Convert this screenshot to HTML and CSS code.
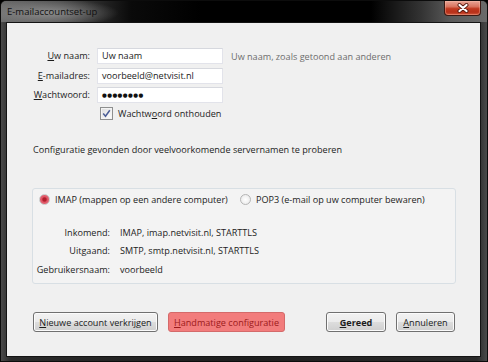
FILE: index.html
```html
<!DOCTYPE html>
<html lang="nl">
<head>
  <meta charset="UTF-8">
  <meta name="viewport" content="width=device-width, initial-scale=1.0">
  <title>E-mailaccountset-up</title>
  <link rel="stylesheet" href="styles.css">
</head>
<body>

  <div class="window">
    <div class="titlebar">
      <span class="title">E-mailaccountset-up</span>
      <span class="close-btn">
        <svg width="14" height="10" viewBox="0 0 14 10">
          <path d="M3.5 2 L10.5 8 M10.5 2 L3.5 8" stroke="#5a1e14" stroke-width="4" stroke-linecap="round"/>
          <path d="M3.5 2 L10.5 8 M10.5 2 L3.5 8" stroke="#ffffff" stroke-width="2.2" stroke-linecap="round"/>
        </svg>
      </span>
    </div>

    <div class="client">
      <!-- Account fields -->
      <div class="identity">
        <label class="field-label"><u>U</u>w naam:</label>
        <div class="textbox">Uw naam</div>
        <span class="hint">Uw naam, zoals getoond aan anderen</span>

        <label class="field-label"><u>E</u>-mailadres:</label>
        <div class="textbox">voorbeeld@netvisit.nl</div>
        <span></span>

        <label class="field-label"><u>W</u>achtwoord:</label>
        <div class="textbox password">&#9679;&#9679;&#9679;&#9679;&#9679;&#9679;&#9679;&#9679;</div>
        <span></span>

        <div class="remember">
          <span class="checkbox">
            <svg width="9" height="9" viewBox="0 0 9 9">
              <path d="M1.2 4.6 L3.5 7.2 L7.8 1.2" fill="none" stroke="#4a5d96" stroke-width="1.5"/>
            </svg>
          </span>
          <span>Wachtw<u>o</u>ord onthouden</span>
        </div>
      </div>

      <p class="status">Configuratie gevonden door veelvoorkomende servernamen te proberen</p>

      <!-- Found configuration -->
      <div class="groupbox">
        <div class="protocols">
          <span class="option imap"><span class="radio checked"></span><span>IMAP (mappen op een andere computer)</span></span>
          <span class="option"><span class="radio"></span><span>POP3 (e-mail op uw computer bewaren)</span></span>
        </div>
        <div class="details">
          <span class="detail-label">Inkomend:</span>
          <span>IMAP, imap.netvisit.nl, STARTTLS</span>
          <span class="detail-label">Uitgaand:</span>
          <span>SMTP, smtp.netvisit.nl, STARTTLS</span>
          <span class="detail-label">Gebruikersnaam:</span>
          <span>voorbeeld</span>
        </div>
      </div>

      <div class="buttons">
        <div class="button-group">
          <button class="btn btn-new"><u>N</u>ieuwe account verkrijgen</button>
          <button class="btn btn-manual"><u>H</u>andmatige configuratie</button>
        </div>
        <div class="button-group">
          <button class="btn btn-done"><u>G</u>ereed</button>
          <button class="btn btn-cancel"><u>A</u>nnuleren</button>
        </div>
      </div>
    </div>
  </div>

</body>
</html>
```

FILE: styles.css
```css
body {
  margin: 0;
  background: #000;
  font-family: "Open Sans", "Noto Sans", sans-serif;
  font-size: 9.1px;
  color: #1c1c1c;
}

u {
  text-decoration: underline;
  text-underline-offset: 1px;
}

/* Window frame */
.window {
  width: 488px;
  height: 362px;
  box-sizing: border-box;
  display: flex;
  flex-direction: column;
  border: 1px solid #0c0c0c;
  border-radius: 6px 6px 0 0;
  background: linear-gradient(to right, #4a4a4a 0, #2a2a2a 10px, #1e1e1e 50%, #2a2a2a calc(100% - 10px), #4a4a4a 100%);
  overflow: hidden;
}

.titlebar {
  height: 21px;
  flex: none;
  display: flex;
  justify-content: space-between;
  align-items: flex-start;
  padding: 0 6px 0 6px;
  background:
    radial-gradient(ellipse 70px 14px at 48px 12px, rgba(150, 150, 150, 0.85), rgba(120, 120, 120, 0) 100%),
    linear-gradient(to right, #6b6b6b 0, #4a4a4a 60px, #0a0a0a 130px, #000 200px, #000 370px, #333 420px, #5a5a5a 450px, #6a6a6a 100%);
}

.title {
  margin-top: 3px;
  font-size: 9.5px;
  line-height: 15px;
  color: #111;
}

.close-btn {
  width: 37px;
  height: 15px;
  box-sizing: border-box;
  display: flex;
  align-items: center;
  justify-content: center;
  border: 1px solid #3c1a14;
  border-top: none;
  border-radius: 0 0 4px 4px;
  background: linear-gradient(#e9a596 0, #d8745f 40%, #c0391f 55%, #b8301a 80%, #d0583c 100%);
  box-shadow: inset 0 0 0 1px rgba(255, 200, 180, 0.35);
}

.client {
  flex: 1;
  margin: 0 6px 4px 5px;
  border: 1px solid #141414;
  background: #f0f0f0;
}

/* Account fields */
.identity {
  display: grid;
  grid-template-columns: 83px 126px auto;
  column-gap: 7px;
  row-gap: 3.5px;
  margin-top: 25px;
  align-items: center;
}

.field-label {
  text-align: right;
  line-height: 16px;
}

.textbox {
  height: 16px;
  box-sizing: border-box;
  padding: 0 4px;
  line-height: 14px;
  background: #fff;
  border: 1px solid #e2e3ea;
  border-top-color: #d6d8de;
  color: #1a1a1a;
}

.password {
  font-family: "DejaVu Sans", sans-serif;
  font-size: 5.5px;
  letter-spacing: 0.4px;
  line-height: 14px;
  color: #111;
}

.hint {
  margin-left: 1px;
  color: #6d6d6d;
}

.remember {
  grid-column: 2 / 4;
  display: flex;
  align-items: center;
  gap: 5px;
  margin-left: 3px;
  height: 13px;
  line-height: 13px;
}

.checkbox {
  width: 13px;
  height: 13px;
  box-sizing: border-box;
  display: flex;
  align-items: center;
  justify-content: center;
  border: 1px solid #8e8f8f;
  background: linear-gradient(135deg, #dcdcdc, #ffffff);
  box-shadow: inset 0 0 0 1px #f4f4f4;
}

.status {
  margin: 22px 0 0 26px;
  line-height: 15px;
}

/* Found configuration */
.groupbox {
  width: 424px;
  box-sizing: border-box;
  margin: 31px 0 0 25px;
  padding: 3px 0 4px 0;
  border: 1px solid #d8dfe4;
  border-radius: 3px;
  background: #f3f3f3;
}

.protocols {
  display: flex;
  line-height: 15px;
  padding-left: 6px;
  white-space: nowrap;
}

.option {
  display: flex;
  align-items: center;
  gap: 5px;
}

.imap {
  width: 201px;
}

.radio {
  width: 11px;
  height: 11px;
  box-sizing: border-box;
  border-radius: 50%;
  border: 1px solid #b5b5b5;
  background: radial-gradient(circle, #ffffff 0, #e6e6e6 100%);
}

.radio.checked {
  border-color: #c7c7c7;
  background: radial-gradient(circle, #b01e2c 0, #b01e2c 25%, #e05565 45%, #e67480 100%);
}

.details {
  display: grid;
  grid-template-columns: 77px auto;
  column-gap: 10px;
  margin-top: 17px;
  line-height: 18.5px;
  white-space: nowrap;
}

.detail-label {
  text-align: right;
}

/* Dialog buttons */
.buttons {
  display: flex;
  justify-content: space-between;
  margin: 28px 25px 0 26px;
}

.button-group {
  display: flex;
  gap: 10px;
}

.btn {
  height: 20px;
  box-sizing: border-box;
  padding: 0;
  font-family: inherit;
  font-size: 9.1px;
  color: #1c1c1c;
  white-space: nowrap;
  border: 1px solid #707070;
  border-radius: 3px;
  background: linear-gradient(#f2f2f2 0, #ebebeb 50%, #dddddd 50%, #cfcfcf 100%);
  box-shadow: inset 0 0 0 1px #fbfbfb;
}

.btn-new { width: 125px; }
.btn-manual {
  width: 117px;
  color: #9c1a1a;
  border-color: #d46a6a;
  background: #f27c7c;
  box-shadow: none;
}
.btn-done { width: 60px; font-weight: bold; }
.btn-cancel { width: 59px; }
```
